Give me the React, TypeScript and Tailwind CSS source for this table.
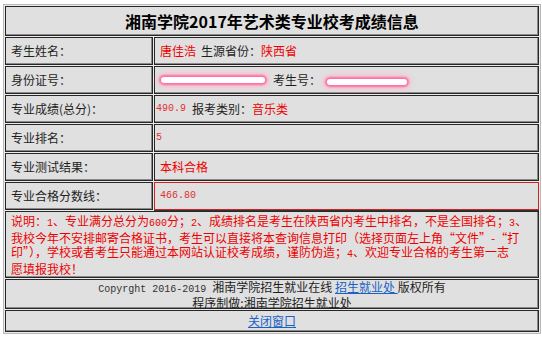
import React from "react";

const cell = "bg-[#e0e0e0] border border-[#262626] shadow-[inset_-1px_-1px_0_#8a8a8a]";
const red = "text-[#ee0000]";
const num = "font-['Liberation_Mono',monospace] text-[10px]";

function Redact({ w }: { w: number }) {
  return (
    <span
      className="inline-block h-[6px] rounded-full bg-white shadow-[0_0_2px_2px_#ff6f9e,0_0_6px_3px_#ffb3cb] align-middle"
      style={{ width: w }}
    />
  );
}

function Row({ label, children, valueClass = "" }: { label: string; children: React.ReactNode; valueClass?: string }) {
  return (
    <div className="grid grid-cols-[148px_385px] gap-[1px]">
      <div className={`${cell} h-[28px] flex items-center pl-[5px] text-[#1e1e1e]`}>{label}</div>
      <div className={`${cell} h-[28px] flex items-center whitespace-nowrap ${valueClass}`}>{children}</div>
    </div>
  );
}

export default function App() {
  return (
    <div
      lang="zh-CN"
      className="w-[542px] h-[338px] bg-white pt-[4px] pl-[3px] text-[12px] leading-[14px] font-['Noto_Sans_CJK_SC',sans-serif] text-[#1e1e1e]"
    >
      <div className="w-[538px] border border-[#b8b8b8] p-[1px] bg-[#ececec] flex flex-col gap-[1px]">
        <div className={`${cell} h-[30px] flex items-center justify-center text-[16px] font-bold text-black`}>
          湘南学院2017年艺术类专业校考成绩信息
        </div>

        <Row label="考生姓名：" valueClass="pl-[5px]">
          <span className={red}>唐佳浩</span>
          <span className="ml-[5px]">生源省份：</span>
          <span className={red}>陕西省</span>
        </Row>

        <Row label="身份证号：" valueClass="pl-[6px]">
          <Redact w={104} />
          <span className="ml-[8px]">考生号：</span>
          <span className="ml-[6px]"><Redact w={80} /></span>
        </Row>

        <Row label="专业成绩(总分)：" valueClass="pl-[1px]">
          <span className={`${num} text-[#e23030]`}>490.9</span>
          <span className="ml-[6px]">报考类别：</span>
          <span className={red}>音乐类</span>
        </Row>

        <Row label="专业排名：" valueClass="pl-[1px]">
          <span className={`${num} text-[#e23030]`}>5</span>
        </Row>

        <Row label="专业测试结果：" valueClass="pl-[5px]">
          <span className={red}>本科合格</span>
        </Row>

        <div className="grid grid-cols-[148px_385px] gap-[1px]">
          <div className={`${cell} h-[28px] flex items-center pl-[5px]`}>专业合格分数线：</div>
          <div className="bg-[#e0e0e0] border border-[#d42020] shadow-[0_1px_0_#333] h-[28px] flex items-center pl-[5px]">
            <span className={`${num} text-[#e23030]`}>466.80</span>
          </div>
        </div>

        <div className={`${cell} h-[67px] flex flex-col justify-center pl-[5px] ${red} whitespace-nowrap`}>
          <div>说明：<span className={num}>1</span>、专业满分总分为<span className={num}>600</span>分；<span className={num}>2</span>、成绩排名是考生在陕西省内考生中排名，不是全国排名；<span className={num}>3</span>、</div>
          <div>我校今年不安排邮寄合格证书，考生可以直接将本查询信息打印（选择页面左上角“文件”-“打</div>
          <div>印”），学校或者考生只能通过本网站认证校考成绩，谨防伪造；<span className={num}>4</span>、欢迎专业合格的考生第一志</div>
          <div>愿填报我校！</div>
        </div>

        <div className={`${cell} h-[30px] flex flex-col justify-center items-center whitespace-nowrap leading-[13px]`}>
          <div>
            <span className={`${num} text-[#333]`}>Copyrght 2016-2019 </span>
            湘南学院招生就业在线{" "}
            <a href="#" className="text-[#1a62c6] underline">招生就业处 </a>
            {" "}版权所有
          </div>
          <div>程序制做:湘南学院招生就业处</div>
        </div>

        <div className={`${cell} h-[22px] flex items-center justify-center`}>
          <a href="#" className="text-[#1a62c6] underline">关闭窗口</a>
        </div>
      </div>
    </div>
  );
}
